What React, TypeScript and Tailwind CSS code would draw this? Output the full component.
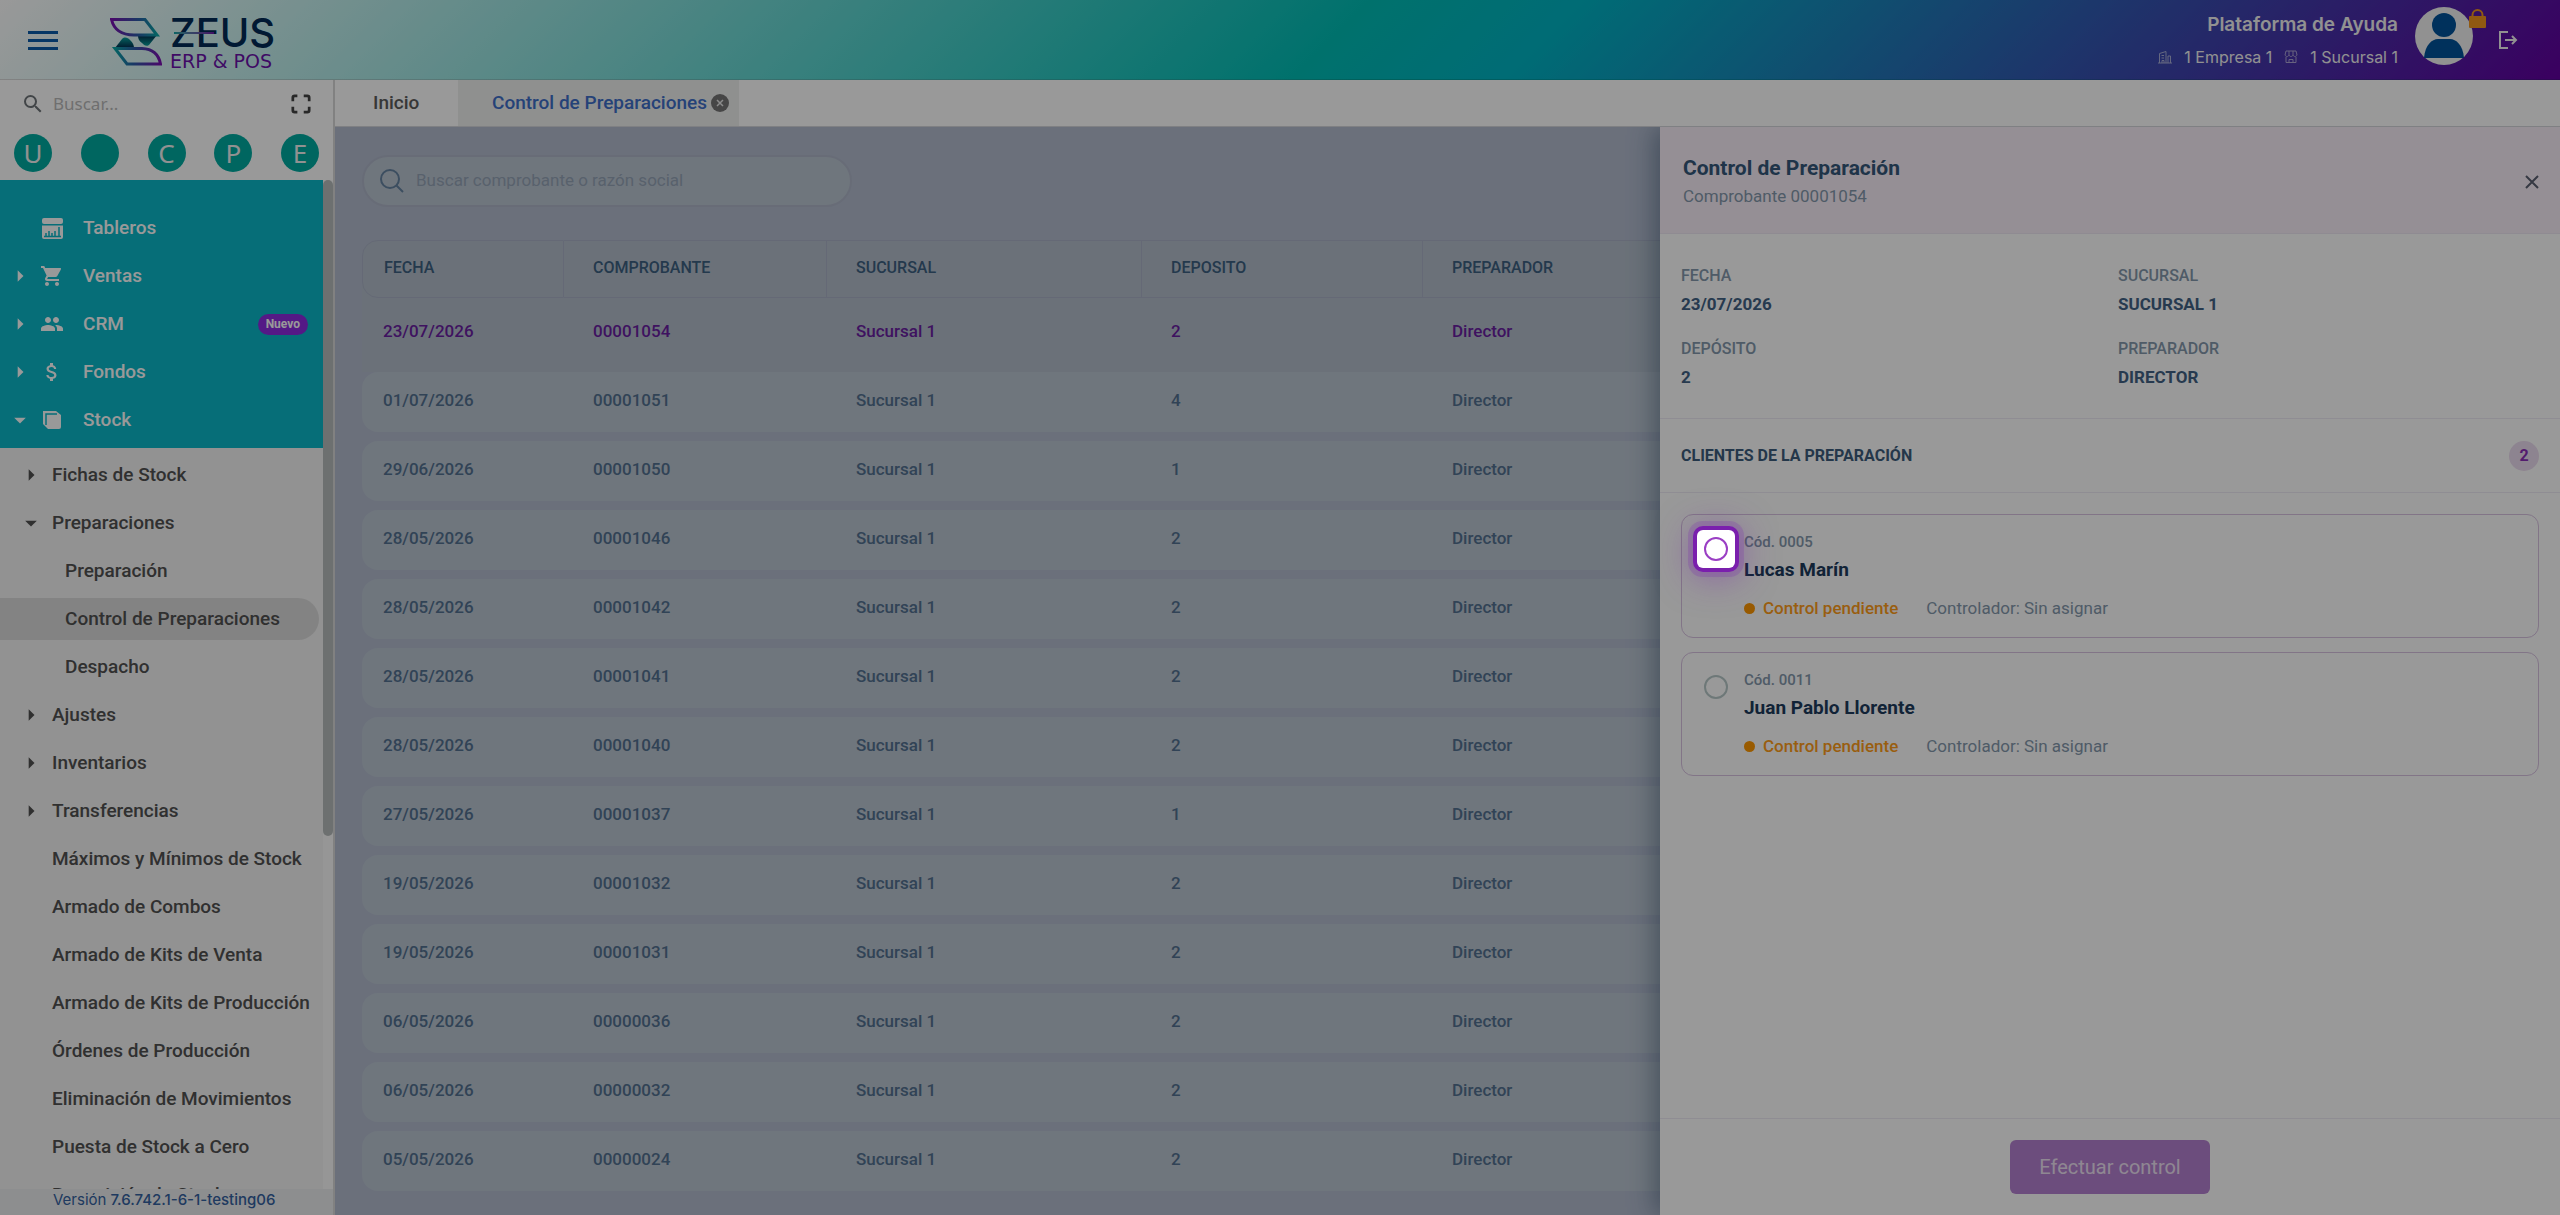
import { useState } from 'react';
import type { ReactNode } from 'react';
import { MdArrowDropDown, MdArrowRight, MdAttachMoney, MdPeople, MdSearch, MdShoppingCart } from 'react-icons/md';

const shortcuts = ['U', '', 'C', 'P', 'E'];

const preparations = [
  { date: '23/07/2026', number: '00001054', deposit: '2' },
  { date: '01/07/2026', number: '00001051', deposit: '4' },
  { date: '29/06/2026', number: '00001050', deposit: '1' },
  { date: '28/05/2026', number: '00001046', deposit: '2' },
  { date: '28/05/2026', number: '00001042', deposit: '2' },
  { date: '28/05/2026', number: '00001041', deposit: '2' },
  { date: '28/05/2026', number: '00001040', deposit: '2' },
  { date: '27/05/2026', number: '00001037', deposit: '1' },
  { date: '19/05/2026', number: '00001032', deposit: '2' },
  { date: '19/05/2026', number: '00001031', deposit: '2' },
  { date: '06/05/2026', number: '00000036', deposit: '2' },
  { date: '06/05/2026', number: '00000032', deposit: '2' },
  { date: '05/05/2026', number: '00000024', deposit: '2' },
];

const clients = [
  { code: '0005', name: 'Lucas Marín' },
  { code: '0011', name: 'Juan Pablo Llorente' },
];

type SubItem = { label: string; level?: number; caret?: 'right' | 'down'; active?: boolean };

const stockMenu: SubItem[] = [
  { label: 'Fichas de Stock', caret: 'right' },
  { label: 'Preparaciones', caret: 'down' },
  { label: 'Preparación', level: 2 },
  { label: 'Control de Preparaciones', level: 2, active: true },
  { label: 'Despacho', level: 2 },
  { label: 'Ajustes', caret: 'right' },
  { label: 'Inventarios', caret: 'right' },
  { label: 'Transferencias', caret: 'right' },
  { label: 'Máximos y Mínimos de Stock' },
  { label: 'Armado de Combos' },
  { label: 'Armado de Kits de Venta' },
  { label: 'Armado de Kits de Producción' },
  { label: 'Órdenes de Producción' },
  { label: 'Eliminación de Movimientos' },
  { label: 'Puesta de Stock a Cero' },
  { label: 'Reposición de Stock' },
];

function Logo() {
  return (
    <a href="#inicio" className="mt-1 flex items-center gap-2" aria-label="Zeus ERP & POS">
      <svg width="52" height="48" viewBox="0 0 52 48" fill="none">
        <defs>
          <linearGradient id="logoTop" x1="0" y1="0" x2="1" y2="0">
            <stop offset="0" stopColor="#7a0fb0" />
            <stop offset="0.6" stopColor="#2a5fa8" />
            <stop offset="1" stopColor="#0aa5a5" />
          </linearGradient>
          <linearGradient id="logoBottom" x1="0" y1="0" x2="1" y2="0">
            <stop offset="0" stopColor="#0aa5a5" />
            <stop offset="0.4" stopColor="#2a5fa8" />
            <stop offset="1" stopColor="#7a0fb0" />
          </linearGradient>
          <linearGradient id="logoFill" x1="0" y1="0" x2="0" y2="1">
            <stop offset="0" stopColor="#022a4c" />
            <stop offset="1" stopColor="#08a09c" />
          </linearGradient>
          <linearGradient id="logoFillUp" x1="0" y1="1" x2="0" y2="0">
            <stop offset="0" stopColor="#022a4c" />
            <stop offset="1" stopColor="#08a09c" />
          </linearGradient>
        </defs>
        <path d="M28 17H47L39 27C36 29 34 27 32 25C29 23 28 21 28 17Z" fill="url(#logoFill)" />
        <path d="M5 30L12 21C15 18 18 20 20 22C23 25 24 27 24 30Z" fill="url(#logoFillUp)" />
        <path d="M1.500 1.500H35L47 17H24C12 17 4 12 1.500 1.500Z" stroke="url(#logoTop)" strokeWidth="3" />
        <path d="M5 30.500H32C44 31 49 38 50.500 46H17Z" stroke="url(#logoBottom)" strokeWidth="3" />
      </svg>
      <span className="relative flex flex-col">
        <span className="font-[Inter,sans-serif] text-[40px] leading-[38px] font-medium text-[#022a55]">ZEUS</span>
        <span className="font-['DejaVu_Sans',sans-serif] text-[19px] leading-[18px] text-[#6a12a8]">ERP &amp; POS</span>
        <span className="absolute top-[18px] left-1 h-0.5 w-10 bg-linear-to-r from-[#0aa5a5] to-[#6a12a8]" />
      </span>
    </a>
  );
}

function TopBar() {
  return (
    <header className="flex h-20 shrink-0 items-center border-b border-black/15 bg-[linear-gradient(135deg,#ffffff_0%,#00bdb5_52%,#00b4c4_60%,#6200a0_100%)] pr-[42px] pl-7">
      <button aria-label="Menú" className="mr-[52px] flex w-[30px] flex-col gap-[5px] pt-0.5">
        <span className="h-[3px] w-full bg-[#0a5aa8]" />
        <span className="h-[3px] w-full bg-[#0a5aa8]" />
        <span className="h-[3px] w-full bg-[#0a5aa8]" />
      </button>
      <Logo />
      <div className="ml-auto flex items-center font-[Inter,sans-serif] text-[#f2f2f2]">
        <div className="flex flex-col items-end gap-2 pt-[3px]">
          <span className="text-[19px] leading-6 font-semibold">Plataforma de Ayuda</span>
          <span className="flex items-center text-base leading-6">
            <svg width="14" height="14" viewBox="0 0 14 14" fill="none" stroke="currentColor" className="mr-3 opacity-60">
              <path d="M1.500 13V3.500L8 1.500V13M0 13H14M10 13V6H12.500V13M3.500 5.500H6M3.500 8H6M4 13V10.500H6V13" />
            </svg>
            1 Empresa 1
            <svg width="14" height="14" viewBox="0 0 14 14" fill="none" stroke="currentColor" className="mr-3 ml-3 opacity-60">
              <path d="M2 1H12L13 5C12 7 10 7 9 5C8 7 6 7 5 5C4 7 2 7 1 5ZM2 7V12.500H12V7M5 1V5M9 1V5M5 12.500V9.500H9V12.500" />
            </svg>
            1 Sucursal 1
          </span>
        </div>
        <div className="relative ml-4 -mt-2">
          <svg width="60" height="60" viewBox="0 0 60 60">
            <circle cx="30" cy="30" r="29" fill="#f2f2f2" />
            <circle cx="30" cy="19" r="12" fill="#005299" />
            <path d="M10 52C11 39 18 33 24 33H36C42 33 49 39 50 52Z" fill="#005299" />
          </svg>
          <svg width="17" height="19" viewBox="0 0 17 19" className="absolute top-[3px] -right-3">
            <path d="M3.500 8V6A5 5 0 0 1 13.500 6V8" fill="none" stroke="#f0951e" strokeWidth="2" />
            <rect y="7" width="17" height="12" rx="1" fill="#f0951e" />
          </svg>
        </div>
        <button aria-label="Salir" className="ml-6">
          <svg width="20" height="20" viewBox="0 0 20 20" fill="none" stroke="currentColor" strokeWidth="2">
            <path d="M10 2H2V18H10M7 10H18M14 6L18 10L14 14" />
          </svg>
        </button>
      </div>
    </header>
  );
}

function MainItem({ label, icon, caret, badge }: { label: string; icon: ReactNode; caret?: 'right' | 'down'; badge?: string }) {
  return (
    <li>
      <a href="#menu" className="flex h-12 items-center pr-[15px] text-[19px] font-medium text-white">
        <span className="flex w-10 justify-center text-[28px]">
          {caret === 'right' && <MdArrowRight />}
          {caret === 'down' && <MdArrowDropDown />}
        </span>
        <span className="flex w-6 justify-center text-2xl">{icon}</span>
        <span className="ml-[19px]">{label}</span>
        {badge && (
          <span className="ml-auto flex h-[21px] items-center rounded-full bg-[#8c2be0] px-2 text-xs font-bold">{badge}</span>
        )}
      </a>
    </li>
  );
}

function Sidebar() {
  return (
    <aside className="flex w-[335px] shrink-0 flex-col border-r-2 border-[#d8d8d8] bg-white">
      <div className="flex h-12 shrink-0 items-center pr-[22px] pl-[21px]">
        <label htmlFor="menu-search" aria-label="Buscar en el menú">
          <MdSearch className="size-6 text-[#6e7478]" />
        </label>
        <input
          id="menu-search"
          placeholder="Buscar..."
          className="ml-2 min-w-0 flex-1 font-['Noto_Sans',sans-serif] text-[17px] outline-none placeholder:text-[#b9b9b9]"
        />
        <button aria-label="Pantalla completa" className="text-[#444]">
          <svg width="20" height="20" viewBox="0 0 22 22" fill="none" stroke="currentColor" strokeWidth="3">
            <path d="M2 8V4Q2 2 4 2H7M14 2H18Q20 2 20 4V8M20 14V18Q20 20 18 20H14M7 20H4Q2 20 2 18V14" />
          </svg>
        </button>
      </div>
      <div className="flex h-[52px] shrink-0 items-center justify-between px-[14px] pb-0.5">
        {shortcuts.map((letter, i) => (
          <button
            key={i}
            aria-label={`Acceso ${i + 1}`}
            className="flex size-[38px] items-center justify-center rounded-full bg-[#00aaa0] font-['Noto_Sans',sans-serif] text-[26px] text-[#f2f2f2]"
          >
            {letter}
          </button>
        ))}
      </div>

      <div className="flex min-h-0 flex-1">
        <nav className="min-w-0 flex-1 overflow-hidden bg-[#f3f3f3]">
          <ul className="bg-[#0ab7c8] pt-6 pb-1">
            <MainItem
              label="Tableros"
              icon={
                <svg width="21" height="21" viewBox="0 0 21 21">
                  <rect width="21" height="6" rx="2" fill="currentColor" />
                  <path d="M0 7.500H21V19Q21 21 19 21H2Q0 21 0 19Z" fill="currentColor" />
                  <path d="M4 18V15M7 18V13M10 18V15M13 18V13M17 18V9M2 18.500H19" stroke="#0ab7c8" strokeWidth="1.500" />
                </svg>
              }
            />
            <MainItem label="Ventas" caret="right" icon={<MdShoppingCart />} />
            <MainItem label="CRM" caret="right" icon={<MdPeople />} badge="Nuevo" />
            <MainItem label="Fondos" caret="right" icon={<MdAttachMoney />} />
            <MainItem
              label="Stock"
              caret="down"
              icon={
                <svg width="20" height="20" viewBox="0 0 20 20">
                  <path d="M1 1H14L19 5V17Q19 19 17 19H6L1 14Z" fill="currentColor" />
                  <path d="M4 15V4H15" fill="none" stroke="#0ab7c8" strokeWidth="1.500" />
                </svg>
              }
            />
          </ul>
          <ul className="pt-[3px]">
            {stockMenu.map(item => (
              <li key={item.label} className="flex h-12 items-center">
                <a
                  href="#stock"
                  className={`flex h-[42px] items-center text-[19px] font-medium whitespace-nowrap text-[#505050] ${
                    item.active ? 'mr-1 flex-1 rounded-r-full bg-[#dbdbdb]' : ''
                  } ${item.level === 2 ? 'pl-[65px]' : ''}`}
                >
                  {item.level !== 2 && (
                    <span className="flex w-[52px] justify-center pl-2.5 text-[28px]">
                      {item.caret === 'right' && <MdArrowRight />}
                      {item.caret === 'down' && <MdArrowDropDown />}
                    </span>
                  )}
                  {item.label}
                </a>
              </li>
            ))}
          </ul>
        </nav>
        <div className="w-2.5 bg-[#fafafa]">
          <div className="h-[65%] rounded-full bg-[#b6bbbb]" />
        </div>
      </div>
      <footer className="flex h-[26px] shrink-0 items-center gap-1 bg-[#ebedee] pb-1 pl-[53px] font-[Inter,sans-serif] text-[15px] text-[#3461a0]">
        Versión <span className="font-medium">7.6.742.1-6-1-testing06</span>
      </footer>
    </aside>
  );
}

function PreparationsTable() {
  const headers = ['FECHA', 'COMPROBANTE', 'SUCURSAL', 'DEPOSITO', 'PREPARADOR'];
  return (
    <table className="w-full table-fixed border-separate border-spacing-0 text-left text-[17px]">
      <colgroup>
        <col className="w-[202px]" />
        <col className="w-[263px]" />
        <col className="w-[315px]" />
        <col className="w-[281px]" />
        <col />
      </colgroup>
      <thead>
        <tr>
          {headers.map((title, i) => (
            <th key={title} className="p-0 font-medium">
              <div className={`bg-[#b2bdca] pb-[5px] ${i === 0 ? 'rounded-tl-2xl' : ''}`}>
                <div
                  className={`flex h-[58px] items-center border-y border-[#a9b0c5] pb-0.5 text-base text-[#3c6080] ${
                    i === 0 ? 'rounded-l-2xl border-l pl-[21px]' : 'pl-[29px]'
                  } ${i < headers.length - 1 ? 'border-r' : ''}`}
                >
                  {title}
                </div>
              </div>
            </th>
          ))}
        </tr>
      </thead>
      <tbody>
        {preparations.map((p, row) => (
          <tr key={p.number}>
            {[p.date, p.number, 'Sucursal 1', p.deposit, 'Director'].map((value, i) => (
              <td key={i} className={row === 0 ? 'bg-[#b2bdca] p-0 pb-[9px]' : 'p-0 pb-[9px]'}>
                <div
                  className={`flex h-[60px] items-center pb-0.5 font-medium ${
                    row === 0 ? 'text-[#691ea0]' : 'bg-[#bac5d1] text-[#52708f]'
                  } ${i === 0 ? 'rounded-l-2xl pl-[21px]' : 'pl-[29px]'}`}
                >
                  {value}
                </div>
              </td>
            ))}
          </tr>
        ))}
      </tbody>
    </table>
  );
}

function Field({ label, value }: { label: string; value: string }) {
  return (
    <div className="text-base leading-7">
      <dt className="font-medium text-[#8498ac]">{label}</dt>
      <dd className="text-[17px] font-bold text-[#416284]">{value}</dd>
    </div>
  );
}

function Drawer() {
  const [selected, setSelected] = useState('');

  return (
    <section className="absolute inset-y-0 right-0 flex w-[900px] flex-col bg-white shadow-[-6px_0_24px_rgba(20,50,80,0.4)]">
      <header className="flex h-[107px] items-center justify-between border-b border-[#eee8f4] bg-[#f8eff8] pt-1 pr-5 pl-[23px]">
        <div>
          <h2 className="text-[21px] leading-7 font-bold text-[#35587a]">Control de Preparación</h2>
          <p className="text-[17px] leading-7 text-[#8498ac]">Comprobante 00001054</p>
        </div>
        <button aria-label="Cerrar" className="text-[#5a5f70]">
          <svg width="16" height="16" viewBox="0 0 16 16" stroke="currentColor" strokeWidth="2">
            <path d="M2 2L14 14M14 2L2 14" />
          </svg>
        </button>
      </header>
      <dl className="grid grid-cols-2 gap-x-4 gap-y-[17px] border-b border-[#eeebf6] px-[21px] pt-7 pb-[27px]">
        <Field label="FECHA" value="23/07/2026" />
        <Field label="SUCURSAL" value="SUCURSAL 1" />
        <Field label="DEPÓSITO" value="2" />
        <Field label="PREPARADOR" value="DIRECTOR" />
      </dl>
      <div className="flex h-[74px] items-center justify-between border-b border-[#eeebf6] px-[21px]">
        <h3 className="text-base font-bold text-[#3c5c7c]">CLIENTES DE LA PREPARACIÓN</h3>
        <span className="flex size-[30px] items-center justify-center rounded-full bg-[#ecdcf0] text-base font-bold text-[#8a2fb8]">
          2
        </span>
      </div>
      <div className="flex flex-1 flex-col gap-3.5 px-[21px] pt-[21px]">
        {clients.map((client, i) => (
          <label key={client.code} className="flex h-[124px] items-start rounded-xl border border-[#d9c3e2] pt-[15px] pl-[15px]">
            {/* the tour step highlights the first radio and dims the rest of the page */}
            <span
              className={`flex size-[38px] shrink-0 items-center justify-center rounded-md ${
                i === 0
                  ? 'relative z-50 bg-white shadow-[0_0_0_4px_#7a1fad,0_0_0_9px_rgba(122,31,173,0.2),0_4px_36px_4px_rgba(122,31,173,0.5),0_0_0_9999px_rgba(0,0,0,0.4)]'
                  : ''
              }`}
            >
              <input
                type="radio"
                name="client"
                checked={selected === client.code}
                onChange={() => setSelected(client.code)}
                className={`size-6 appearance-none rounded-full border-2 ${i === 0 ? 'border-[#9a3fc4]' : 'border-[#b8c9c9]'}`}
              />
            </span>
            <span className="ml-[9px] flex flex-col pt-0.5">
              <span className="text-[15px] leading-5 font-medium text-[#8498ac]">Cód. {client.code}</span>
              <span className="mt-0.5 text-[19px] leading-8 font-bold text-[#1d3b5c]">{client.name}</span>
              <span className="mt-2 flex items-center text-[17px] leading-7">
                <span className="size-[11px] rounded-full bg-[#ff9800]" />
                <span className="ml-2 font-medium text-[#ff9d1a]">Control pendiente</span>
                <span className="ml-7 text-[#8498ac]">Controlador: Sin asignar</span>
              </span>
            </span>
          </label>
        ))}
      </div>
      <footer className="flex h-[97px] items-center justify-center border-t border-[#eeebf6]">
        <button disabled className="h-[54px] w-[200px] rounded-md bg-[#b580d0] text-xl text-[#eee2f4]">
          Efectuar control
        </button>
      </footer>
    </section>
  );
}

export default function App() {
  return (
    <div className="flex h-screen flex-col overflow-hidden bg-white font-[Roboto,sans-serif]">
      <TopBar />
      <div className="flex min-h-0 flex-1">
        <Sidebar />
        <div className="flex min-w-0 flex-1 flex-col">
          <nav className="relative z-10 flex h-[47px] shrink-0 border-b border-[#d4d6da] bg-white text-[19px] font-medium">
            <a href="#inicio" className="flex w-[123px] items-center pl-[38px] text-[#5c5c5c]">Inicio</a>
            <div className="flex items-center gap-1 bg-[#eef0ef] pr-2.5 pl-[34px]">
              <a href="#control" className="text-[#3f6fc8]">Control de Preparaciones</a>
              <button aria-label="Cerrar pestaña">
                <svg width="18" height="18" viewBox="0 0 18 18">
                  <circle cx="9" cy="9" r="9" fill="#757575" />
                  <path d="M6 6L12 12M12 6L6 12" stroke="#e8e8e8" strokeWidth="1.500" />
                </svg>
              </button>
            </div>
          </nav>
          <main className="relative min-h-0 flex-1 bg-[#b2bbce]">
            <div className="flex h-full flex-col gap-[33px] overflow-hidden px-[27px] pt-7">
              <div className="flex h-[52px] w-[490px] shrink-0 items-center rounded-full border-2 border-[#adb5c7] bg-[#bac5d1] px-4">
                <label htmlFor="search" aria-label="Buscar comprobante">
                  <svg width="24" height="24" viewBox="0 0 24 24" fill="none" stroke="#6482a0" strokeWidth="2">
                    <circle cx="10" cy="10" r="9" />
                    <path d="M16.500 16.500L23 23" />
                  </svg>
                </label>
                <input
                  id="search"
                  placeholder="Buscar comprobante o razón social"
                  className="ml-3 min-w-0 flex-1 bg-transparent text-[17px] outline-none placeholder:text-[#93a2b5]"
                />
              </div>
              <PreparationsTable />
            </div>
            <Drawer />
          </main>
        </div>
      </div>
    </div>
  );
}
